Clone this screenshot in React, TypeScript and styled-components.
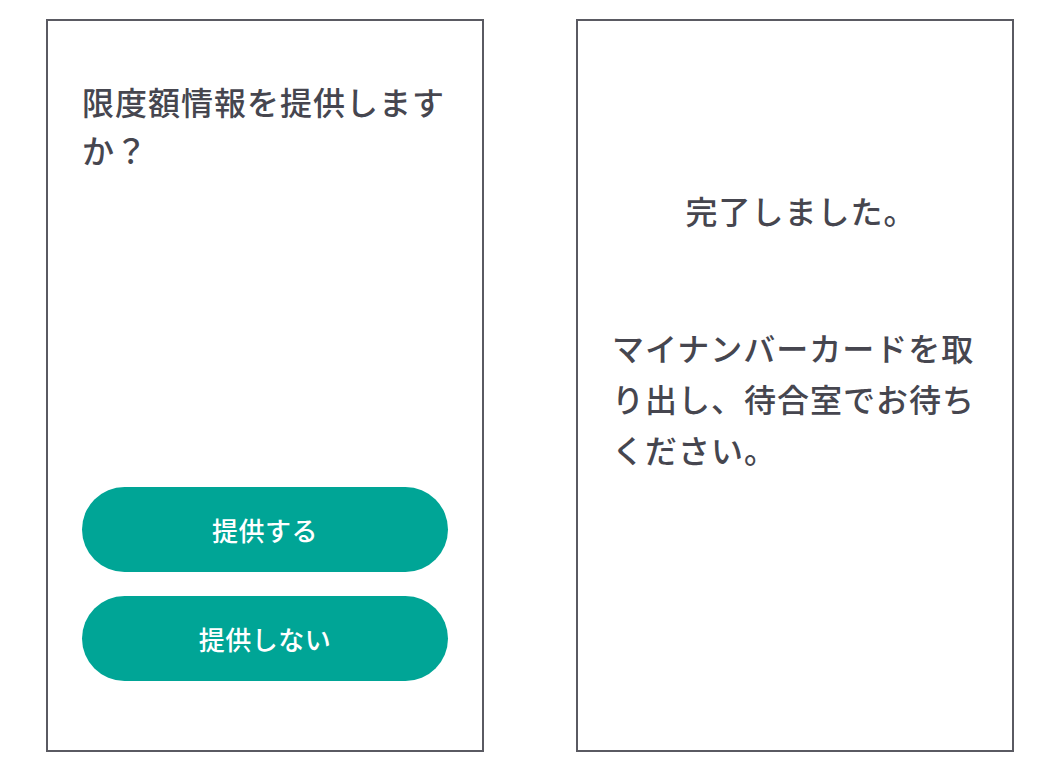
import React from 'react'
import styled, {createGlobalStyle} from 'styled-components'

const GlobalStyle = createGlobalStyle`
    html, body {
        margin: 0;
        padding: 0;
        background: #ffffff;
    }
    body {
        font-family: "Noto Sans CJK JP", "Noto Sans", sans-serif;
        color: #46464f;
    }
`

const Screens = styled.div`
    display: flex;
    gap: 92px;
    padding: 19px 0 0 46px;
`

const Panel = styled.section`
    box-sizing: border-box;
    display: flex;
    flex-direction: column;
    width: 438px;
    height: 733px;
    border: 2px solid #5a5a62;
    padding: 56px 34px 69px;
`

const Question = styled.h1`
    margin: 0;
    font-size: 32px;
    font-weight: 500;
    letter-spacing: 1px;
    line-height: 48px;
`

const Actions = styled.div`
    display: flex;
    flex-direction: column;
    gap: 24px;
    margin-top: auto;
`

const PillButton = styled.button`
    height: 85px;
    border: none;
    border-radius: 43px;
    background: #00a596;
    color: #ffffff;
    font-family: "Noto Sans CJK JP", "Noto Sans", sans-serif;
    font-size: 26px;
    font-weight: 500;
    letter-spacing: 0.5px;
    cursor: pointer;
`

const DoneTitle = styled.h2`
    margin: 109px 0 0;
    padding-left: 12px;
    text-align: center;
    font-size: 32px;
    font-weight: 500;
    letter-spacing: 1px;
    line-height: 48px;
`

const Message = styled.p`
    margin: 88px 0 0;
    font-size: 32px;
    font-weight: 500;
    letter-spacing: 1px;
    line-height: 51px;
`

export default function App() {
    return (
        <>
            <GlobalStyle />
            <Screens>
                <Panel>
                    <Question>限度額情報を提供しますか？</Question>
                    <Actions>
                        <PillButton>提供する</PillButton>
                        <PillButton>提供しない</PillButton>
                    </Actions>
                </Panel>
                <Panel>
                    <DoneTitle>完了しました。</DoneTitle>
                    <Message>マイナンバーカードを取り出し、待合室でお待ちください。</Message>
                </Panel>
            </Screens>
        </>
    )
}
